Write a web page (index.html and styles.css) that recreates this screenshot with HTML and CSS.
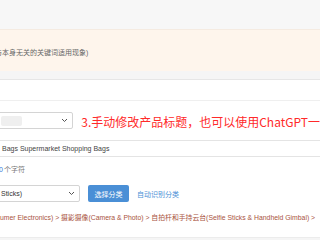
FILE: index.html
```html
<!DOCTYPE html>
<html>
<head>
<meta charset="utf-8">
<link rel="stylesheet" href="styles.css">
</head>
<body>
<div class="top"></div>
<div class="alert"><span class="alert-text">与本身无关的关键词适用现象)</span></div>
<div class="gap"></div>
<div class="panel">
  <div class="head"></div>
  <div class="row row1">
    <div class="select s1">
      <span class="blur"></span>
      <svg class="chev" width="7" height="5" viewBox="0 0 7 5"><polyline points="1,1 3.5,3.5 6,1" fill="none" stroke="#555" stroke-width="1"/></svg>
    </div>
    <span class="note">3.手动修改产品标题，也可以使用ChatGPT一</span>
  </div>
  <div class="input"><span class="input-text">Bags Supermarket Shopping Bags</span></div>
  <div class="count"><span class="num">0</span>个字符</div>
  <div class="row row2">
    <div class="select s2">
      <span class="sel-text">Sticks)</span>
      <svg class="chev" width="7" height="5" viewBox="0 0 7 5"><polyline points="1,1 3.5,3.5 6,1" fill="none" stroke="#555" stroke-width="1"/></svg>
    </div>
    <button class="btn">选择分类</button>
    <a class="link">自动识别分类</a>
  </div>
  <div class="crumb">umer Electronics) &gt; 摄影摄像(Camera &amp; Photo) &gt; 自拍杆和手持云台(Selfie Sticks &amp; Handheld Gimbal) &gt;</div>
</div>
<div class="foot"></div>
</body>
</html>
```
FILE: styles.css
```css
html, body {
  margin: 0;
  padding: 0;
  background: #fff;
  overflow: hidden;
  width: 320px;
  height: 240px;
  font-family: "Liberation Sans", "Noto Sans CJK SC", sans-serif;
  font-size: 7px;
}
.top {
  height: 29px;
  background: #f7f7f7;
}
.alert {
  height: 42px;
  box-sizing: border-box;
  background: #fef5ec;
  border-top: 1px solid #f5ebe1;
  display: flex;
  align-items: center;
  padding-top: 2px;
  color: #666;
  white-space: nowrap;
  overflow: hidden;
}
.alert-text {
  margin-left: -5px;
}
.gap {
  height: 8px;
  background: #f5f5f5;
  border-bottom: 1px solid #e6e6e6;
}
.panel {
  background: #fff;
}
.head {
  height: 20px;
  border-bottom: 1px solid #efefef;
}
.row {
  display: flex;
  align-items: center;
  white-space: nowrap;
}
.row1 {
  margin-top: 11px;
}
.select {
  box-sizing: border-box;
  height: 17px;
  border: 1px solid #d4d4d4;
  border-radius: 2px;
  margin-left: -40px;
  width: 120px;
  display: flex;
  align-items: center;
  padding-left: 40px;
  padding-right: 4px;
}
.blur {
  width: 21px;
  height: 10px;
  background: #efefef;
  border-radius: 2px;
}
.chev {
  margin-left: auto;
}
.note {
  margin-left: 8px;
  color: #ff2a2a;
  font-family: "Noto Sans CJK SC", sans-serif;
  font-size: 12px;
  line-height: 14px;
  margin-top: 2px;
}
.input {
  margin-top: 11px;
  height: 17px;
  box-sizing: border-box;
  border-top: 1px solid #e4e4e4;
  border-bottom: 1px solid #e4e4e4;
  display: flex;
  align-items: center;
  padding-left: 2px;
  color: #444;
}
.count {
  margin-top: 8px;
  height: 10px;
  line-height: 10px;
  color: #777;
  margin-left: -1px;
}
.num {
  color: #3a78d8;
  margin-right: 1px;
}
.row2 {
  margin-top: 10px;
}
.sel-text {
  color: #333;
}
.btn {
  margin-left: 8px;
  width: 41px;
  height: 17px;
  border: none;
  border-radius: 2px;
  background: #4a8fd6;
  color: #fff;
  font-family: "Noto Sans CJK SC", sans-serif;
  font-size: 7px;
  padding: 0;
}
.link {
  margin-left: 8px;
  color: #4a8fd6;
  font-family: "Noto Sans CJK SC", sans-serif;
  font-size: 7px;
}
.crumb {
  margin-top: 10px;
  height: 11px;
  line-height: 11px;
  color: #a9533e;
  white-space: nowrap;
  font-size: 6.85px;
}
.foot {
  margin-top: 14px;
  height: 3px;
  border-top: 1px solid #ececec;
  background: #f5f5f5;
}
```
